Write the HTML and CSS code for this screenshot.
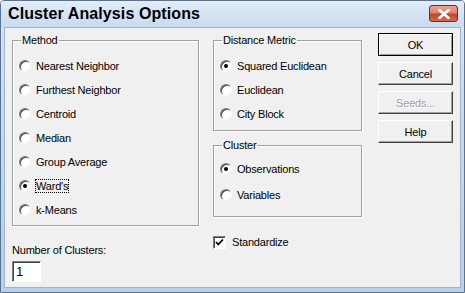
FILE: index.html
```html
<!DOCTYPE html>
<html lang="en">
<head>
    <meta charset="UTF-8">
    <title>Cluster Analysis Options</title>
    <link rel="stylesheet" href="styles.css">
</head>
<body>
    <div class="window">
        <div class="titlebar">
            <span class="title">Cluster Analysis Options</span>
            <span class="close">
                <svg width="12" height="10" viewBox="0 0 12 10">
                    <path d="M1.5 1 L10.5 9 M10.5 1 L1.5 9" stroke="#fff" stroke-width="2.6" stroke-linecap="square"/>
                </svg>
            </span>
        </div>

        <div class="client">
            <!-- left column -->
            <div class="col col-method">
                <fieldset class="group group-method">
                    <legend>Method</legend>
                    <div class="opt"><span class="radio"></span><span>Nearest Neighbor</span></div>
                    <div class="opt"><span class="radio"></span><span>Furthest Neighbor</span></div>
                    <div class="opt"><span class="radio"></span><span>Centroid</span></div>
                    <div class="opt"><span class="radio"></span><span>Median</span></div>
                    <div class="opt"><span class="radio"></span><span>Group Average</span></div>
                    <div class="opt"><span class="radio checked"></span><span class="focus">Ward's</span></div>
                    <div class="opt"><span class="radio"></span><span>k-Means</span></div>
                </fieldset>
                <div class="clusters-label">Number of Clusters:</div>
                <div class="textbox">1</div>
            </div>

            <!-- middle column -->
            <div class="col col-options">
                <fieldset class="group group-metric">
                    <legend>Distance Metric</legend>
                    <div class="opt"><span class="radio checked"></span><span>Squared Euclidean</span></div>
                    <div class="opt"><span class="radio"></span><span>Euclidean</span></div>
                    <div class="opt"><span class="radio"></span><span>City Block</span></div>
                </fieldset>
                <fieldset class="group group-cluster">
                    <legend>Cluster</legend>
                    <div class="opt"><span class="radio checked"></span><span>Observations</span></div>
                    <div class="opt"><span class="radio"></span><span>Variables</span></div>
                </fieldset>
                <div class="check-row">
                    <span class="checkbox">
                        <svg width="9" height="9" viewBox="0 0 9 9">
                            <path d="M1 4 L3.3 6.5 L8 1.5" fill="none" stroke="#000" stroke-width="1.8"/>
                        </svg>
                    </span>
                    <span>Standardize</span>
                </div>
            </div>

            <!-- buttons -->
            <div class="col col-buttons">
                <div class="btn default">OK</div>
                <div class="btn">Cancel</div>
                <div class="btn disabled">Seeds...</div>
                <div class="btn">Help</div>
            </div>
        </div>
    </div>
</body>
</html>
```

FILE: styles.css
```css
body {
    margin: 0;
    background: #fff;
    font-family: "Liberation Sans", Arial, sans-serif;
    font-size: 11px;
    color: #000;
}
.window {
    width: 465px;
    height: 293px;
    box-sizing: border-box;
    border: 1px solid #587491;
    border-radius: 4px 4px 0 0;
    background: linear-gradient(to bottom, #d9e6f4 0%, #c7d9ee 40%, #b9cfe8 100%);
    display: flex;
    flex-direction: column;
}
.titlebar {
    height: 26px;
    display: flex;
    justify-content: space-between;
    align-items: flex-start;
    padding: 0 6px 0 7px;
    background: linear-gradient(to bottom, #e3edf8 0%, #d4e3f3 50%, #c9dbef 100%);
    border-radius: 3px 3px 0 0;
}
.title {
    font-weight: bold;
    font-size: 16px;
    line-height: 26px;
    letter-spacing: 0.1px;
    color: #000;
}
.close {
    margin-top: 4px;
    width: 29px;
    height: 17px;
    box-sizing: border-box;
    border: 1px solid #6e2d22;
    border-radius: 3px;
    background: linear-gradient(to bottom, #e8a493 0%, #d98671 45%, #c4452c 55%, #cf6a4f 100%);
    display: flex;
    align-items: center;
    justify-content: center;
}
.client {
    flex: 1;
    margin: 0 3px 4px 3px;
    background: #f0f0f0;
    border: 1px solid #9fb3ca;
    display: flex;
    align-items: flex-start;
    letter-spacing: -0.2px;
}
.col {
    display: flex;
    flex-direction: column;
}
.col-method {
    margin-left: 7px;
    margin-top: 6px;
    width: 187px;
}
.col-options {
    margin-left: 14px;
    margin-top: 6px;
    width: 149px;
}
.col-buttons {
    margin-left: 16px;
    margin-top: 5px;
    gap: 6px;
}
.group {
    margin: 0;
    padding: 7px 0 3px 6px;
    border: 1px solid #a0a0a0;
    box-shadow: 1px 1px 0 #fff, inset 1px 1px 0 #fff;
    min-width: 0;
}
.group legend {
    padding: 0 1px;
    margin-left: 2px;
    line-height: 13px;
}
.group-metric {
    padding-bottom: 4px;
}
.group-cluster {
    margin-top: 8px;
    padding-top: 4px;
    padding-bottom: 8px;
}
.opt {
    height: 24px;
    display: flex;
    align-items: center;
    gap: 5px;
}
.group-cluster .opt {
    height: 26px;
}
.radio {
    width: 12px;
    height: 12px;
    box-sizing: border-box;
    border-radius: 50%;
    background: #fff;
    border: 1px solid;
    border-color: #808080 #f6f6f6 #f6f6f6 #808080;
    box-shadow: inset 1px 1px 0 #404040;
    display: flex;
    align-items: center;
    justify-content: center;
}
.radio.checked::after {
    content: "";
    width: 4px;
    height: 4px;
    border-radius: 50%;
    background: #000;
}
.focus {
    outline: 1px dotted #000;
    outline-offset: 0;
}
.clusters-label {
    margin-top: 18px;
    line-height: 13px;
}
.textbox {
    margin-top: 4px;
    width: 29px;
    height: 21px;
    box-sizing: border-box;
    background: #fff;
    border: 1px solid;
    border-color: #808080 #fff #fff #808080;
    box-shadow: inset 1px 1px 0 #404040;
    padding: 3px 0 0 3px;
    font-size: 13px;
    line-height: 14px;
}
.check-row {
    margin-top: 18px;
    display: flex;
    align-items: center;
    gap: 6px;
    height: 14px;
}
.checkbox {
    width: 13px;
    height: 13px;
    box-sizing: border-box;
    background: #fff;
    border: 1px solid;
    border-color: #808080 #fff #fff #808080;
    box-shadow: inset 1px 1px 0 #404040;
    display: flex;
    align-items: center;
    justify-content: center;
}
.btn {
    width: 75px;
    height: 23px;
    box-sizing: border-box;
    display: flex;
    align-items: center;
    justify-content: center;
    background: #f0f0f0;
    border: 1px solid;
    border-color: #fff #404040 #404040 #fff;
    box-shadow: inset -1px -1px 0 #a0a0a0;
}
.btn.default {
    outline: 1px solid #000;
    outline-offset: -1px;
    border-color: #000;
    box-shadow: inset 1px 1px 0 #fff, inset -1px -1px 0 #a0a0a0;
}
.btn.disabled {
    color: #a0a0a0;
    text-shadow: 1px 1px 0 #fff;
}
```
